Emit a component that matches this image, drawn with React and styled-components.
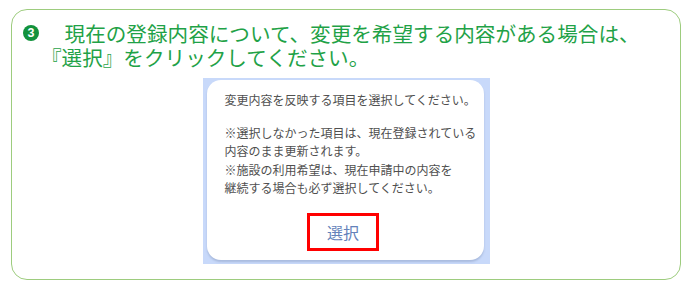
import React from "react";
import styled, { createGlobalStyle } from "styled-components";

const Global = createGlobalStyle`
  html, body { margin: 0; padding: 0; background: #ffffff; }
  body { font-family: "Noto Sans CJK JP", "Noto Sans", sans-serif; }
`;

const Frame = styled.section`
  box-sizing: border-box;
  margin: 9px 9px 0 11px;
  height: 271px;
  border: 1.5px solid #9dcc7e;
  border-radius: 16px;
  padding: 11px 0 0 0;
  display: flex;
  flex-direction: column;
  align-items: center;
`;

const Title = styled.h2`
  align-self: stretch;
  margin: 0;
  padding-left: 29px;
  text-indent: -19px;
  font-size: 20.6px;
  line-height: 24px;
  font-weight: 400;
  color: #1fa247;
`;

const Num = styled.span`
  display: inline-block;
  width: 22px;
  height: 24px;
  text-indent: 0;
  vertical-align: top;
  &::before {
    content: "3";
    display: flex;
    align-items: center;
    justify-content: center;
    margin: 4px 0 0 1px;
    width: 16px;
    height: 16px;
    border-radius: 50%;
    background: #12923c;
    color: #ffffff;
    font-family: "Liberation Sans", Arial, sans-serif;
    font-weight: 700;
    font-size: 12.5px;
    line-height: 1;
  }
`;

const Shot = styled.div`
  margin-top: 9px;
  box-sizing: border-box;
  width: 287px;
  height: 186px;
  background: #c8d9fa;
  padding: 2px 6px 4px 4px;
  display: flex;
`;

const Card = styled.div`
  flex: 1;
  background: #ffffff;
  border-radius: 14px;
  box-shadow: 0 2px 2px rgba(80, 100, 140, 0.25);
  padding: 11px 0 0 18px;
  display: flex;
  flex-direction: column;
`;

const Para = styled.p`
  margin: 0 0 ${(p) => p.$gap || 0}px 0;
  font-size: 12px;
  line-height: 18.5px;
  color: #4f4f4f;
  white-space: nowrap;
`;

const ButtonRow = styled.div`
  display: flex;
  justify-content: center;
  margin-top: 15px;
  padding-right: 22px;
`;

const SelectButton = styled.button`
  box-sizing: border-box;
  width: 72px;
  height: 38px;
  border: 3px solid #ff0000;
  background: #ffffff;
  color: #6482ba;
  font-family: "Noto Sans CJK JP", sans-serif;
  font-size: 16px;
  padding: 0;
  cursor: pointer;
`;

export default function App() {
  return (
    <>
      <Global />
      <Frame>
        <Title>
          <Num />　現在の登録内容について、変更を希望する内容がある場合は、
          <br />
          『選択』をクリックしてください。
        </Title>
        <Shot>
          <Card>
            <Para $gap={14}>変更内容を反映する項目を選択してください。</Para>
            <Para>
              ※選択しなかった項目は、現在登録されている
              <br />
              内容のまま更新されます。
              <br />
              ※施設の利用希望は、現在申請中の内容を
              <br />
              継続する場合も必ず選択してください。
            </Para>
            <ButtonRow>
              <SelectButton>選択</SelectButton>
            </ButtonRow>
          </Card>
        </Shot>
      </Frame>
    </>
  );
}
